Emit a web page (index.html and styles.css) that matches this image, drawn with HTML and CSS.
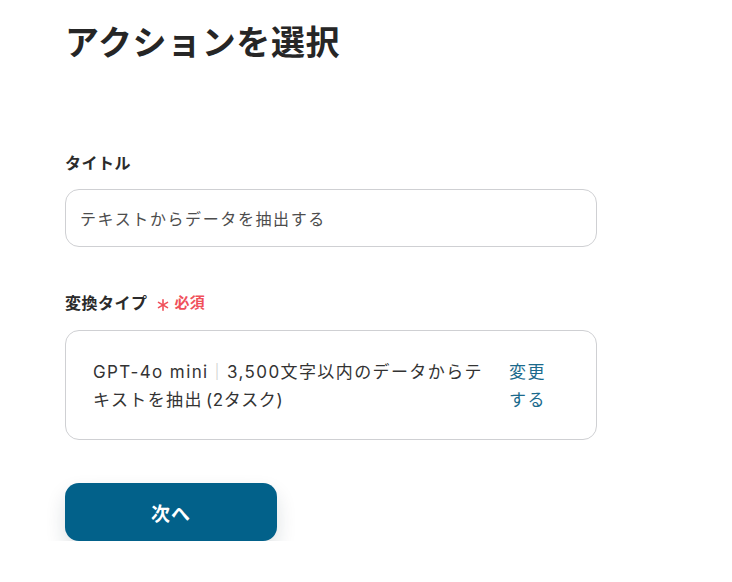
FILE: index.html
```html
<!DOCTYPE html>
<html lang="ja">
<head>
<meta charset="utf-8">
<link rel="stylesheet" href="styles.css">
</head>
<body>
<main class="page">
  <h1 class="title">アクションを選択</h1>
  <section class="field field-title">
    <label class="label">タイトル</label>
    <div class="input">テキストからデータを抽出する</div>
  </section>
  <section class="field field-type">
    <div class="label">変換タイプ<span class="req"><svg class="ast" width="12" height="12" viewBox="0 0 12 12" aria-hidden="true"><g stroke="#f0505a" stroke-width="1.6" stroke-linecap="round"><line x1="6" y1="0.8" x2="6" y2="11.2"/><line x1="1.5" y1="3.4" x2="10.5" y2="8.6"/><line x1="1.5" y1="8.6" x2="10.5" y2="3.4"/></g></svg>必須</span></div>
    <div class="select">
      <p class="select-text">GPT-4o mini<span class="sep">｜</span>3,500文字以内のデータからテキストを抽出<span class="paren">(2タスク)</span></p>
      <a class="change">変更する</a>
    </div>
  </section>
  <button class="next">次へ</button>
</main>
</body>
</html>
```

FILE: styles.css
```css
* { box-sizing: border-box; }
html, body { margin: 0; padding: 0; background: #fff; }
body {
  font-family: "Noto Sans CJK JP", "Noto Sans", sans-serif;
  color: #2b2b2b;
}
.page {
  width: 532px;
  margin-left: 65px;
  padding-top: 16px;
}
.title {
  margin: 0;
  font-size: 34px;
  line-height: 50px;
  font-weight: 700;
  color: #262626;
  letter-spacing: 0.6px;
}
.field-title { margin-top: 84px; }
.field-type { margin-top: 43px; }
.label {
  display: flex;
  align-items: center;
  font-size: 16px;
  font-weight: 700;
  line-height: 24px;
  color: #2b2b2b;
  letter-spacing: 0.5px;
}
.req {
  display: inline-flex;
  align-items: center;
  margin-left: 9px;
  color: #f0505a;
  font-size: 15px;
  font-weight: 700;
  letter-spacing: 0.3px;
}
.ast { margin-right: 6px; position: relative; top: 3px; }
.input {
  margin-top: 15px;
  height: 58px;
  border: 1px solid #cfd0d3;
  border-radius: 14px;
  padding: 0 14px;
  display: flex;
  align-items: center;
  font-size: 16px;
  color: #4d4d4d;
  letter-spacing: 1.6px;
}
.select {
  margin-top: 16px;
  height: 110px;
  border: 1px solid #cfd0d3;
  border-radius: 14px;
  padding: 26px 28px 26px 27px;
  display: flex;
  gap: 16px;
  align-items: flex-start;
}
.select-text {
  margin: 0;
  flex: 1;
  font-family: "Inter", "Noto Sans CJK JP", sans-serif;
  font-size: 17px;
  line-height: 28px;
  letter-spacing: 1.4px;
  color: #333;
}
.sep { color: #c4c4c4; font-family: "Noto Sans CJK JP", sans-serif; }
.paren { margin-left: 3px; letter-spacing: 0.6px; }
.change {
  width: 40px;
  font-size: 17px;
  line-height: 28px;
  letter-spacing: 1.4px;
  color: #1b6a8c;
  margin-right: 19px;
}
.next {
  margin-top: 43px;
  width: 212px;
  height: 58px;
  border: none;
  border-radius: 14px;
  background: #02618a;
  color: #fff;
  font-family: inherit;
  font-size: 19px;
  font-weight: 700;
  letter-spacing: 1px;
  box-shadow: 0 10px 20px rgba(20, 40, 60, 0.14);
}
```
